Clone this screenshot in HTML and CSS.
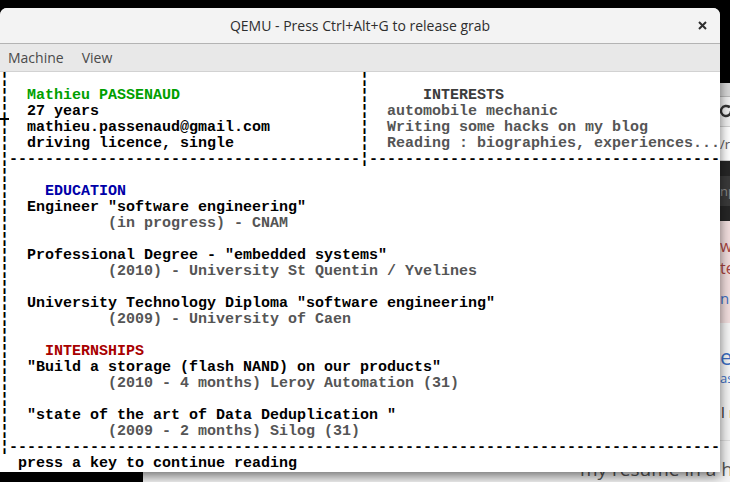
FILE: index.html
```html
<!DOCTYPE html>
<html lang="en">
<head>
<meta charset="utf-8">
<title>QEMU</title>
<link rel="stylesheet" href="styles.css">
</head>
<body>
<div class="desktop">
  <div class="browser">
    <div class="b-tabs"></div>
    <div class="b-nav">
      <svg class="b-reload" width="16" height="16" viewBox="0 0 16 16"><path d="M13 8a5 5 0 1 1-1.5-3.6" fill="none" stroke="#333" stroke-width="2.4"/><path d="M9.5 2.5h4v4z" fill="#333"/></svg>
    </div>
    <div class="b-url"><span>/r</span></div>
    <div class="b-dark"><div class="b-search"><span>np</span></div></div>
    <div class="b-alert">
      <p class="b-red">w</p>
      <p class="b-red">te</p>
      <p class="b-link">n</p>
    </div>
    <div class="b-list">
      <p class="b-big">er</p>
      <p class="b-small">as</p>
    </div>
    <div class="b-body">
      <p class="b-text">l r</p>
      <div class="b-rule"></div>
      <p class="b-heading">my resume in a ho</p>
    </div>
  </div>

  <div class="qemu">
    <div class="titlebar">
      <span class="title">QEMU - Press Ctrl+Alt+G to release grab</span>
      <svg class="close" width="9" height="9" viewBox="0 0 9 9"><path d="M1 1L8 8M8 1L1 8" stroke="#2e2e2e" stroke-width="2"/></svg>
    </div>
    <div class="menubar">
      <span>Machine</span>
      <span>View</span>
    </div>
    <div class="screen">
      <div class="top">
<pre class="col">¦
¦  <span class="green">Mathieu PASSENAUD</span>
<span class="cur">¦</span>  27 years
¦  mathieu.passenaud@gmail.com
¦  driving licence, single
¦---------------------------------------</pre>
<pre class="col">¦
¦      <span class="dim">INTERESTS</span>
¦  <span class="grey">automobile mechanic</span>
¦  <span class="grey">Writing some hacks on my blog</span>
¦  <span class="grey">Reading : biographies, experiences...</span>
¦---------------------------------------</pre>
      </div>
<pre class="rest">¦
¦    <span class="blue">EDUCATION</span>
¦  Engineer "software engineering"
¦           <span class="grey">(in progress) - CNAM</span>
¦
¦  Professional Degree - "embedded systems"
¦           <span class="grey">(2010) - University St Quentin / Yvelines</span>
¦
¦  University Technology Diploma "software engineering"
¦           <span class="grey">(2009) - University of Caen</span>
¦
¦    <span class="red">INTERNSHIPS</span>
¦  "Build a storage (flash NAND) on our products"
¦           <span class="grey">(2010 - 4 months) Leroy Automation (31)</span>
¦
¦  "state of the art of Data Deduplication "
¦           <span class="grey">(2009 - 2 months) Silog (31)</span>
¦-------------------------------------------------------------------------------
  press a key to continue reading</pre>
    </div>
  </div>
</div>
</body>
</html>
```

FILE: styles.css
```css
* { box-sizing: border-box; }

html, body {
  margin: 0;
  padding: 0;
}

body {
  width: 730px;
  height: 482px;
  overflow: hidden;
  background: #000;
  font-family: "Open Sans", "Noto Sans", sans-serif;
}

.desktop {
  position: relative;
  width: 730px;
  height: 482px;
}

/* ---------- browser window behind ---------- */
.browser {
  position: absolute;
  left: 143px;
  top: 83px;
  width: 600px;
  height: 399px;
  background: #fff;
  display: flex;
  flex-direction: column;
}

.browser p { margin: 0; white-space: nowrap; }

.b-tabs {
  height: 14px;
  background: #d8d8d8;
  border-bottom: 1px solid #b8b8b8;
}

.b-nav {
  height: 30px;
  background: #f1f1f1;
  padding: 6px 0 0 575px;
}

.b-reload { display: block; }

.b-url {
  height: 35px;
  background: #fff;
  border-top: 1px solid #d0d0d0;
  border-bottom: 1px solid #d0d0d0;
  padding: 9px 0 0 577px;
  font-size: 13px;
  line-height: 16px;
  color: #555;
}

.b-dark {
  height: 61px;
  background: #262626;
  padding-top: 15px;
}

.b-search {
  height: 30px;
  background: #3a3a3a;
  padding: 6px 0 0 577px;
  font-size: 13px;
  line-height: 18px;
  color: #8a8a8a;
}

.b-alert {
  height: 104px;
  background: #f2dede;
  padding: 14px 0 0 577px;
  font-size: 16px;
  line-height: 22px;
}

.b-red { color: #a94442; }

.browser .b-link {
  color: #3b6fc4;
  margin-top: 8px;
  font-size: 15px;
}

.b-list {
  height: 68px;
  background: #f6f6f6;
  padding: 19px 0 0 577px;
  color: #3b6fc4;
}

.b-big { font-size: 22px; line-height: 28px; }
.b-small { font-size: 13px; line-height: 16px; }

.b-body {
  flex: 1;
  background: #f4f4f4;
  padding-top: 13px;
}

.b-text {
  padding-left: 578px;
  font-size: 15px;
  line-height: 18px;
  color: #333;
}

.b-rule {
  margin-top: 19px;
  height: 1px;
  background: #ddd;
}

.browser .b-heading {
  margin-top: 15px;
  padding-left: 437px;
  font-size: 19px;
  line-height: 26px;
  color: #555;
}

/* ---------- QEMU window ---------- */
.qemu {
  position: absolute;
  left: 0;
  top: 8px;
  width: 720px;
  border-radius: 7px 7px 0 0;
  background: #fff;
  box-shadow: 0 4px 12px rgba(0, 0, 0, 0.55);
  overflow: hidden;
}

.titlebar {
  height: 36px;
  background: #f3f3f3;
  border-bottom: 1px solid #b3b3b3;
  display: grid;
  grid-template-columns: 1fr auto 1fr;
  align-items: center;
  padding: 0 13px;
}

.title {
  grid-column: 2;
  font-size: 14px;
  font-weight: 500;
  color: #2e2e2e;
  white-space: nowrap;
}

.close {
  grid-column: 3;
  justify-self: end;
  display: block;
}

.menubar {
  height: 28px;
  background: #e8e8e8;
  border-bottom: 1px solid #d2d2d2;
  display: flex;
  align-items: center;
  gap: 18px;
  padding-left: 8px;
  font-size: 14px;
  color: #4a4a4a;
}

.screen {
  width: 720px;
  height: 400px;
  background: #fff;
  overflow: hidden;
}

.top {
  display: grid;
  grid-template-columns: 360px 360px;
}

.screen pre {
  margin: 0;
  font-family: "Liberation Mono", monospace;
  font-weight: 700;
  font-size: 15px;
  line-height: 16px;
  color: #000;
  white-space: pre;
  overflow: hidden;
}

.green { color: #00a000; }
.blue { color: #0000a8; }
.red { color: #a80000; }
.grey { color: #555; }
.dim { color: #3c3c3c; }

.cur {
  text-decoration: underline 2px;
  text-underline-offset: 3px;
}
```
